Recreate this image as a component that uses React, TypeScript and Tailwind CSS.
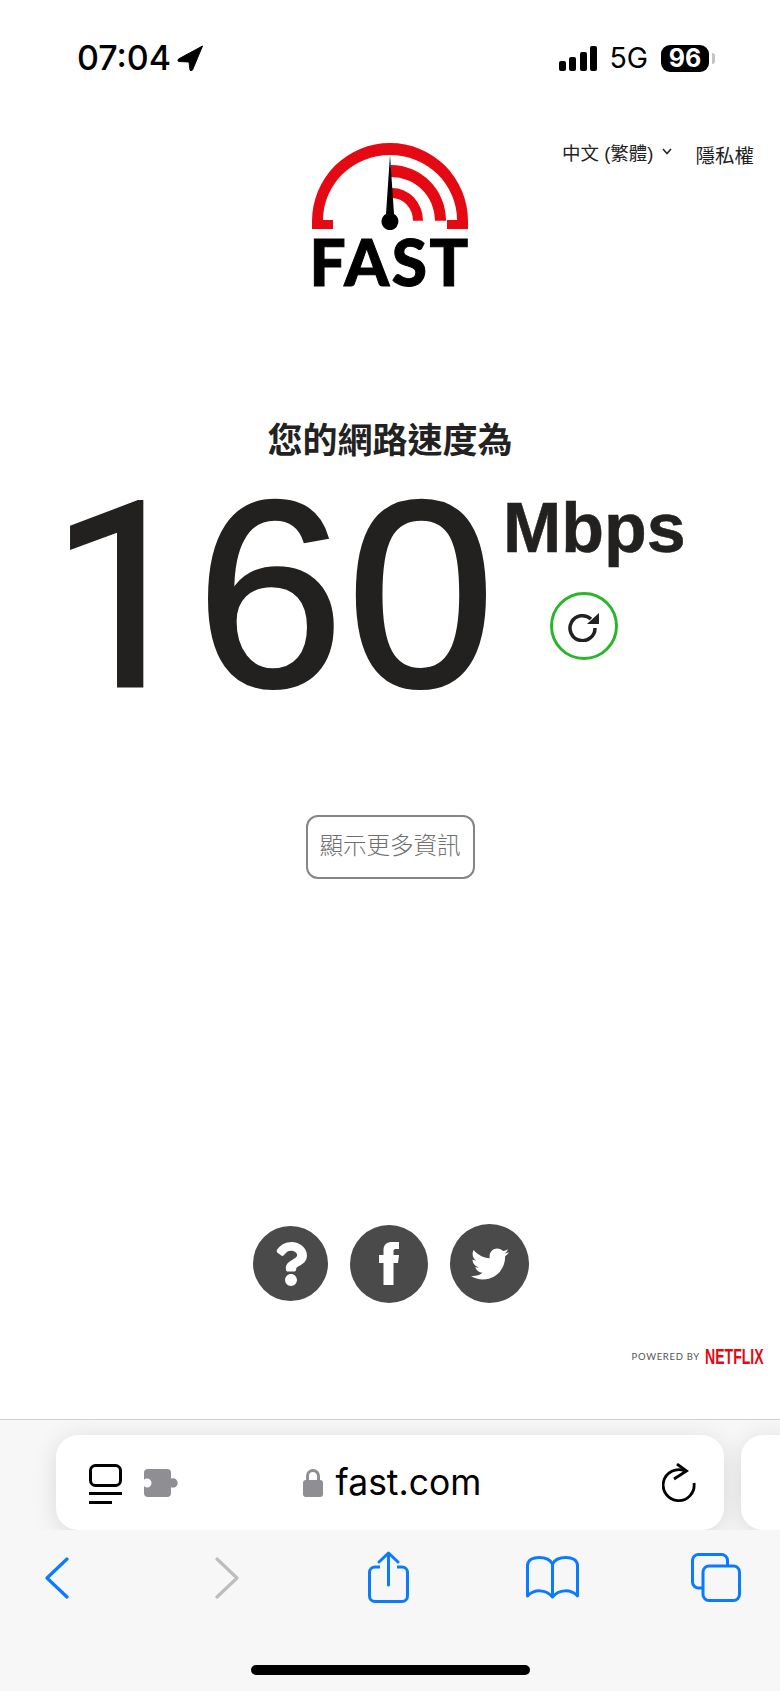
import { FaQuestion, FaTwitter } from "react-icons/fa";

const cjk = "font-['Liberation_Sans','Noto_Sans_CJK_TC',sans-serif]";

function StatusBar() {
  return (
    <div className="h-[72px] pt-[44px] pl-[77px] pr-[65px] flex justify-between items-start shrink-0 font-['Inter',sans-serif] text-black">
      <div className="flex items-center gap-[6px] h-[28px]">
        <span className="text-[34px] leading-[28px] font-medium">07:04</span>
        <svg width="26" height="26" viewBox="0 0 26 26">
          <path d="M25.5 1 L1.5 14 Q0 16 2 16.5 L12 17 L13 25 Q14 27 15.5 25 Z" fill="#000" stroke="#000" strokeWidth="1" strokeLinejoin="round" />
        </svg>
      </div>
      <div className="flex items-center h-[28px]">
        <div className="flex items-end gap-[3.5px] h-[25px] mt-[1px]">
          <div className="w-[7px] h-[10px] bg-black rounded-[2px]" />
          <div className="w-[7px] h-[14px] bg-black rounded-[2px]" />
          <div className="w-[7px] h-[19px] bg-black rounded-[2px]" />
          <div className="w-[7px] h-[25px] bg-black rounded-[2px]" />
        </div>
        <span className="ml-[12px] text-[28.5px] leading-[28px]">5G</span>
        <div className="ml-[13px] w-[48px] h-[27px] bg-black rounded-[9px] flex items-center justify-center text-white text-[25px] font-bold leading-none">96</div>
        <div className="ml-[3px] w-[3px] h-[11px] bg-[#c4c4c4] rounded-r-full" />
      </div>
    </div>
  );
}

function Logo() {
  return (
    <div className="w-[156px] h-[143px] flex flex-col items-center">
      <svg width="156" height="88" viewBox="0 0 156 88" className="shrink-0 overflow-visible">
        <path d="M0 86 V78 A78 78 0 0 1 156 78 V86 H135 V77 H145 A67 65 0 0 0 11 77 H21 V86 Z" fill="#e50914" />
        <path d="M79 22 A55 55.7 0 0 1 134 77.7 H123 A44 43.7 0 0 0 79 34 Z" fill="#e50914" />
        <path d="M80 45 A31 32.7 0 0 1 111 77.7 H101 A21 22.7 0 0 0 80 55 Z" fill="#e50914" />
        <path d="M78 12 L82 71 A8.5 8.5 0 1 1 74 71 Z" fill="#000" />
      </svg>
      <div className="font-['Lato',sans-serif] font-black text-[64px] leading-[46px] mt-[8px] tracking-[2.5px] text-black whitespace-nowrap [-webkit-text-stroke:1px_#000]">FAST</div>
    </div>
  );
}

function Header() {
  return (
    <div className="mt-[71px] h-[143px] grid grid-cols-[1fr_156px_1fr] shrink-0">
      <div />
      <Logo />
      <div className={`flex justify-end pr-[26px] text-[#222] text-[18.5px] leading-[22px] ${cjk}`}>
        <div className="flex items-start">
          <span>中文 (繁體)</span>
          <svg width="10" height="7" viewBox="0 0 10 7" className="ml-[9px] mt-[5px]">
            <path d="M1 1 L5 5.5 L9 1" fill="none" stroke="#222" strokeWidth="1.5" />
          </svg>
          <span className="ml-[23px] mt-[2px] text-[19.5px]">隱私權</span>
        </div>
      </div>
    </div>
  );
}

function Speed() {
  return (
    <div className="flex flex-col items-center">
      <h1 className={`mt-[135px] text-[35px] leading-[40px] font-bold text-[#222] ${cjk}`}>您的網路速度為</h1>
      <div className="mt-[5px] w-full pl-[50px] flex items-start text-[#22211f]">
        <div className="flex items-baseline h-[256px] leading-[256px] [-webkit-text-stroke:3px_#22211f]">
          <span className="w-[146px] font-['Roboto',sans-serif] text-[258px]">1</span>
          <span className="font-['Liberation_Sans',sans-serif] text-[266px] tracking-[3px]">60</span>
        </div>
        <div className="ml-[5px] mt-[22px] flex flex-col items-start">
          <div className="font-['Liberation_Sans',sans-serif] font-bold text-[70px] leading-[80px] [-webkit-text-stroke:0.5px_#22211f]">Mbps</div>
          <button className="mt-[24px] ml-[47px] w-[68px] h-[68px] rounded-full border-[3px] border-[#2bb52b] flex items-center justify-center">
            <svg width="31" height="31" viewBox="0 0 31 31">
              <path d="M23 8 A12.5 12.5 0 1 0 27 17" fill="none" stroke="#22211f" strokeWidth="3.5" />
              <path d="M31 2 V13 H19 Z" fill="#22211f" />
            </svg>
          </button>
        </div>
      </div>
      <button className={`mt-[93px] w-[169px] h-[64px] rounded-[12px] border-[2.5px] border-[#858585] text-[#6f6f6f] text-[23.5px] font-light ${cjk}`}>顯示更多資訊</button>
    </div>
  );
}

function Footer() {
  return (
    <div className="mt-auto">
      <div className="flex items-center justify-center gap-[22px] pl-[2px]">
        <div className="w-[75px] h-[75px] rounded-full bg-[#4a4a4a] flex items-center justify-center text-white">
          <FaQuestion size={44} />
        </div>
        <div className="w-[78px] h-[78px] rounded-full bg-[#4a4a4a] flex items-center justify-center">
          <svg width="20" height="43" viewBox="0 0 20 43">
            <path d="M14.5 43 H4.5 V21 H0 V13 H4.5 V8 C4.5 2.5 8 0 13 0 H20 V7 H16.5 C15 7 14.5 8 14.5 9.5 V13 H20 L19 21 H14.5 Z" fill="#fff" />
          </svg>
        </div>
        <div className="w-[79px] h-[79px] rounded-full bg-[#4a4a4a] flex items-center justify-center text-white">
          <FaTwitter size={38} />
        </div>
      </div>
      <div className="mt-[45px] mb-[53px] pr-[16px] flex justify-end items-center gap-[5px]">
        <span className="font-['Lato',sans-serif] text-[9.5px] tracking-[0.7px] text-[#555] leading-none">POWERED BY</span>
        <span className="w-[59px] font-['Liberation_Sans',sans-serif] font-bold text-[22px] leading-[18px] text-[#e50914] whitespace-nowrap origin-left scale-x-[0.64]">NETFLIX</span>
      </div>
    </div>
  );
}

function AddressBar() {
  return (
    <div className="flex gap-[17px] pl-[56px] pt-[15px] overflow-hidden">
      <div className="w-[668px] h-[95px] shrink-0 rounded-[22px] bg-white shadow-[0_4px_24px_rgba(0,0,0,0.12)] flex items-center justify-between pl-[33px] pr-[28px]">
        <div className="flex items-center gap-[22px]">
          <svg width="33" height="41" viewBox="0 0 33 41" className="mt-[4px]">
            <rect x="1.5" y="1.5" width="30" height="20" rx="5" fill="none" stroke="#000" strokeWidth="3" />
            <path d="M0 29.5 H33 M0 38.5 H23" stroke="#000" strokeWidth="3" />
          </svg>
          <svg width="34" height="28" viewBox="0 0 34 28">
            <rect x="0" y="0" width="27" height="28" rx="4" fill="#8e8e93" />
            <circle cx="29" cy="14" r="4.7" fill="#8e8e93" />
            <circle cx="3" cy="14" r="4.5" fill="#fff" />
          </svg>
        </div>
        <div className="flex items-center gap-[13px] mr-[56px]">
          <svg width="20" height="29" viewBox="0 0 20 29">
            <path d="M4.5 14 V8 A5.5 5.5 0 0 1 15.5 8 V14" fill="none" stroke="#8e8e93" strokeWidth="3" />
            <rect x="0" y="12" width="20" height="17" rx="3" fill="#8e8e93" />
          </svg>
          <span className="font-['Inter',sans-serif] text-[35.5px] leading-[40px] mt-[1px] text-black">fast.com</span>
        </div>
        <svg width="34" height="40" viewBox="0 0 34 40">
          <path d="M23 8 A15.5 15.5 0 1 0 32 20" fill="none" stroke="#000" strokeWidth="2.8" />
          <path d="M15 1 L24.5 8 L12 16" fill="none" stroke="#000" strokeWidth="2.8" />
        </svg>
      </div>
      <div className="w-[60px] h-[95px] shrink-0 rounded-[22px] bg-white shadow-[0_4px_24px_rgba(0,0,0,0.12)]" />
    </div>
  );
}

function Toolbar() {
  return (
    <div className="mt-[21px] pl-[45px] flex items-start h-[54px]">
      <svg width="24" height="42" viewBox="0 0 24 42" className="mt-[6px]">
        <path d="M22 2 L2 21 L22 40" fill="none" stroke="#0a7aff" strokeWidth="3.2" strokeLinecap="round" strokeLinejoin="round" />
      </svg>
      <svg width="24" height="42" viewBox="0 0 24 42" className="mt-[6px] ml-[146px]">
        <path d="M2 2 L22 21 L2 40" fill="none" stroke="#bdbdbd" strokeWidth="3.2" strokeLinecap="round" strokeLinejoin="round" />
      </svg>
      <svg width="41" height="52" viewBox="0 0 41 52" className="ml-[129px]">
        <path d="M12 16 H7 A5.5 5.5 0 0 0 1.5 21.5 V45 A5.5 5.5 0 0 0 7 50.5 H34 A5.5 5.5 0 0 0 39.5 45 V21.5 A5.5 5.5 0 0 0 34 16 H29" fill="none" stroke="#0a7aff" strokeWidth="3" />
        <path d="M20.5 34 V2 M11 11 L20.5 2 L30 11" fill="none" stroke="#0a7aff" strokeWidth="3" strokeLinecap="round" strokeLinejoin="round" />
      </svg>
      <svg width="53" height="44" viewBox="0 0 53 44" className="mt-[5px] ml-[117px]">
        <path d="M26.5 41 V8 C24 3 19 1.5 13 1.5 C7 1.5 2 4 1.5 9 V40 C8 33 20 33 26.5 41 C33 33 45 33 51.5 40 V9 C51 4 46 1.5 40 1.5 C34 1.5 29 3 26.5 8" fill="none" stroke="#0a7aff" strokeWidth="3" strokeLinejoin="round" />
      </svg>
      <svg width="50" height="49" viewBox="0 0 50 49" className="mt-[2px] ml-[112px]">
        <path d="M12 35 H8 A6 6 0 0 1 1.5 29 V8 A6 6 0 0 1 8 1.5 H30 A6 6 0 0 1 36.5 8 V12" fill="none" stroke="#0a7aff" strokeWidth="3" />
        <rect x="12" y="13" width="36.5" height="34.5" rx="6" fill="none" stroke="#0a7aff" strokeWidth="3" />
      </svg>
    </div>
  );
}

function BrowserChrome() {
  return (
    <div className="h-[272px] shrink-0 bg-[#f7f7f7] border-t border-[#cfcfcf]">
      <AddressBar />
      <Toolbar />
      <div className="mt-[60px] mx-auto w-[279px] h-[10px] rounded-full bg-black" />
    </div>
  );
}

export default function App() {
  return (
    <div className="w-[780px] h-[1691px] bg-white flex flex-col overflow-hidden">
      <StatusBar />
      <Header />
      <Speed />
      <Footer />
      <BrowserChrome />
    </div>
  );
}
